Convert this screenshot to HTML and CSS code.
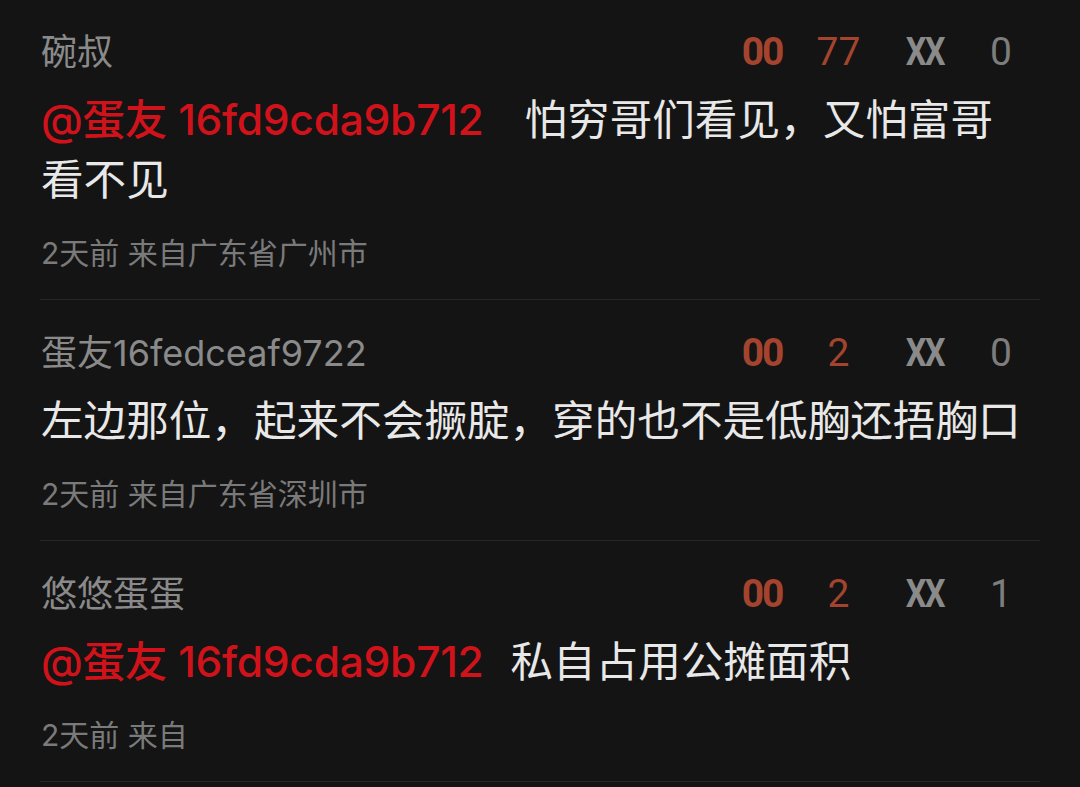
FILE: index.html
```html
<!DOCTYPE html>
<html lang="zh-CN">

<head>
    <meta charset="UTF-8">
    <meta name="viewport" content="width=device-width, initial-scale=1.0">
    <title>评论</title>
    <link rel="stylesheet" href="styles.css">
</head>

<body>
    <div class="comment-list">
        <div class="comment">
            <div class="comment-head">
                <span class="author">碗叔</span>
                <div class="votes">
                    <span class="vote-icon up">00</span>
                    <span class="vote-count up">77</span>
                    <span class="vote-icon down">XX</span>
                    <span class="vote-count down">0</span>
                </div>
            </div>
            <div class="comment-body">
                <span class="mention wide">@蛋友 16fd9cda9b712</span><span>怕穷哥们看见，又怕富哥</span><span>看不见</span>
            </div>
            <div class="comment-meta">2天前 来自广东省广州市</div>
        </div>

        <div class="comment">
            <div class="comment-head">
                <span class="author">蛋友16fedceaf9722</span>
                <div class="votes">
                    <span class="vote-icon up">00</span>
                    <span class="vote-count up">2</span>
                    <span class="vote-icon down">XX</span>
                    <span class="vote-count down">0</span>
                </div>
            </div>
            <div class="comment-body">左边那位，起来不会撅腚，穿的也不是低胸还捂胸口</div>
            <div class="comment-meta">2天前 来自广东省深圳市</div>
        </div>

        <div class="comment">
            <div class="comment-head">
                <span class="author">悠悠蛋蛋</span>
                <div class="votes">
                    <span class="vote-icon up">00</span>
                    <span class="vote-count up">2</span>
                    <span class="vote-icon down">XX</span>
                    <span class="vote-count down">1</span>
                </div>
            </div>
            <div class="comment-body">
                <span class="mention">@蛋友 16fd9cda9b712</span><span>私自占用公摊面积</span>
            </div>
            <div class="comment-meta">2天前 来自</div>
        </div>
    </div>
</body>

</html>
```

FILE: styles.css
```css
body {
    margin: 0;
    padding: 0 40px;
    background-color: #141414;
    font-family: 'Inter', 'Noto Sans CJK SC', sans-serif;
}

.comment-list {
    margin-top: -1px;
}

.comment {
    padding: 28px 0 24px 1px;
    border-bottom: 1px solid #262626;
}

.comment-head {
    display: flex;
    align-items: center;
    justify-content: space-between;
    height: 50px;
}

.author {
    font-size: 36px;
    color: #8a8a8a;
    line-height: 50px;
}

.votes {
    display: flex;
    align-items: center;
    margin-right: 9px;
    font-family: 'Roboto', sans-serif;
    font-size: 39px;
    line-height: 50px;
}

.vote-icon {
    display: inline-block;
    font-weight: bold;
    letter-spacing: -2px;
    margin-right: 26px;
}

.vote-icon.down {
    margin-right: 23px;
    transform: scaleX(0.84);
}

.vote-count {
    width: 60px;
    text-align: center;
}

.vote-count.up {
    margin-right: 34px;
}

.up {
    color: #a4442f;
}

.down {
    color: #8a8a8a;
}

.vote-count.down {
    color: #7d7d7d;
}

.comment-body {
    margin-top: 13px;
    padding-right: 12px;
    font-size: 42.6px;
    line-height: 60px;
    color: #e8e8e8;
}

.mention {
    color: #d0121b;
    font-weight: 500;
    letter-spacing: -0.3px;
    margin-right: 27px;
}

.mention.wide {
    margin-right: 41px;
}

.comment-meta {
    margin-top: 21px;
    font-size: 30px;
    line-height: 44px;
    color: #7a7a7a;
}
```
